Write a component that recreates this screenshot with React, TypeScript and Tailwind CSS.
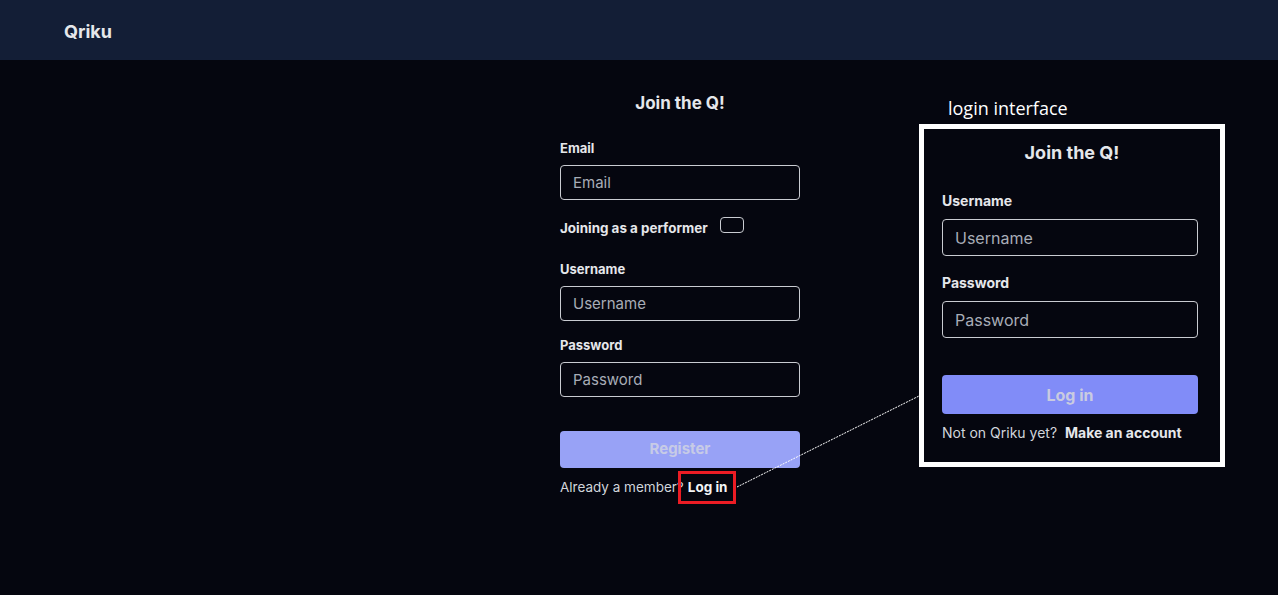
import React from 'react'

function Field({ label, placeholder, type = 'text', big = false }: { label: string; placeholder: string; type?: string; big?: boolean }) {
  return (
    <div className="flex flex-col">
      <label className={`${big ? 'text-[14px] leading-[18px]' : 'text-[13px] leading-4'} font-bold text-[#e5e7eb] mb-[9px]`}>{label}</label>
      <input
        type={type}
        placeholder={placeholder}
        className={`w-full ${big ? 'h-[37px] text-[16px]' : 'h-[35px] text-[15px]'} rounded-[4px] border border-[#c9cbd1] bg-[#05060f] px-3 text-[#d1d5db] placeholder:text-[#a8adb7] outline-none`}
      />
    </div>
  )
}

export default function App() {
  return (
    <div className="relative min-h-[595px] bg-[#05060f] font-['Inter',sans-serif] overflow-hidden">
      <header className="h-[60px] bg-[#131e36] flex items-center px-16">
        <span className="text-[18px] font-bold text-[#e5e7eb] mt-[2px]">Qriku</span>
      </header>

      {/* register form */}
      <main className="flex justify-center pt-[33px]">
        <div className="w-[240px] ml-[82px] flex flex-col">
          <h1 className="text-center text-[17px] font-bold text-[#e5e7eb] leading-5 mb-[27px]">Join the Q!</h1>
          <Field label="Email" placeholder="Email" type="email" />
          <div className="flex items-center mt-[19px] mb-[24px] h-[18px]">
            <span className="text-[13.4px] font-bold text-[#e5e7eb]">Joining as a performer</span>
            <span className="ml-[12px] w-[24px] h-[16px] rounded-[4px] border border-[#c9cbd1] -mt-[6px]" />
          </div>
          <Field label="Username" placeholder="Username" />
          <div className="mt-[16px]">
            <Field label="Password" placeholder="Password" type="password" />
          </div>
          <button className="mt-[34px] h-[37px] rounded-[4px] bg-[#98a2f6] text-[15px] font-bold text-[#c7cbe6]">Register</button>
          <div className="mt-[10px] flex items-center h-[18px] text-[13.5px] text-[#d1d5db]">
            <span>Already a member?</span>
            <span className="relative ml-[4px] font-bold text-[#f3f4f6]">
              Log in
              <span className="absolute -left-[10px] -right-[9px] -top-[6px] -bottom-[7px] border-[3px] border-[#ec1c24]" />
            </span>
          </div>
        </div>
      </main>

      {/* annotation connector */}
      <svg className="absolute left-0 top-0 pointer-events-none" width="1278" height="595">
        <line x1="737" y1="487" x2="921" y2="395" stroke="#ffffff" strokeWidth="1" strokeDasharray="2 1" />
      </svg>

      {/* annotation: login interface */}
      <div className="absolute left-[919px] top-[96px] w-[306px]">
        <div className="pl-[29px] text-[18px] text-white font-['Open_Sans',sans-serif] leading-6 mb-[4px]">login interface</div>
        <div className="h-[343px] border-[5px] border-white bg-[#05060f] pl-[18px] pr-[22px] pt-[12px]">
          <h2 className="text-center text-[18px] font-bold text-[#e5e7eb] leading-6 mb-[27px] pl-[4px]">Join the Q!</h2>
          <Field label="Username" placeholder="Username" big />
          <div className="mt-[18px]">
            <Field label="Password" placeholder="Password" type="password" big />
          </div>
          <button className="mt-[37px] w-full h-[39px] rounded-[4px] bg-[#818cf8] text-[16px] font-bold text-[#c9cbe0]">Log in</button>
          <div className="mt-[10px] text-[14px] leading-[18px] text-[#d1d5db]">
            Not on Qriku yet? <span className="ml-[4px] font-bold text-[#e5e7eb]">Make an account</span>
          </div>
        </div>
      </div>
    </div>
  )
}
